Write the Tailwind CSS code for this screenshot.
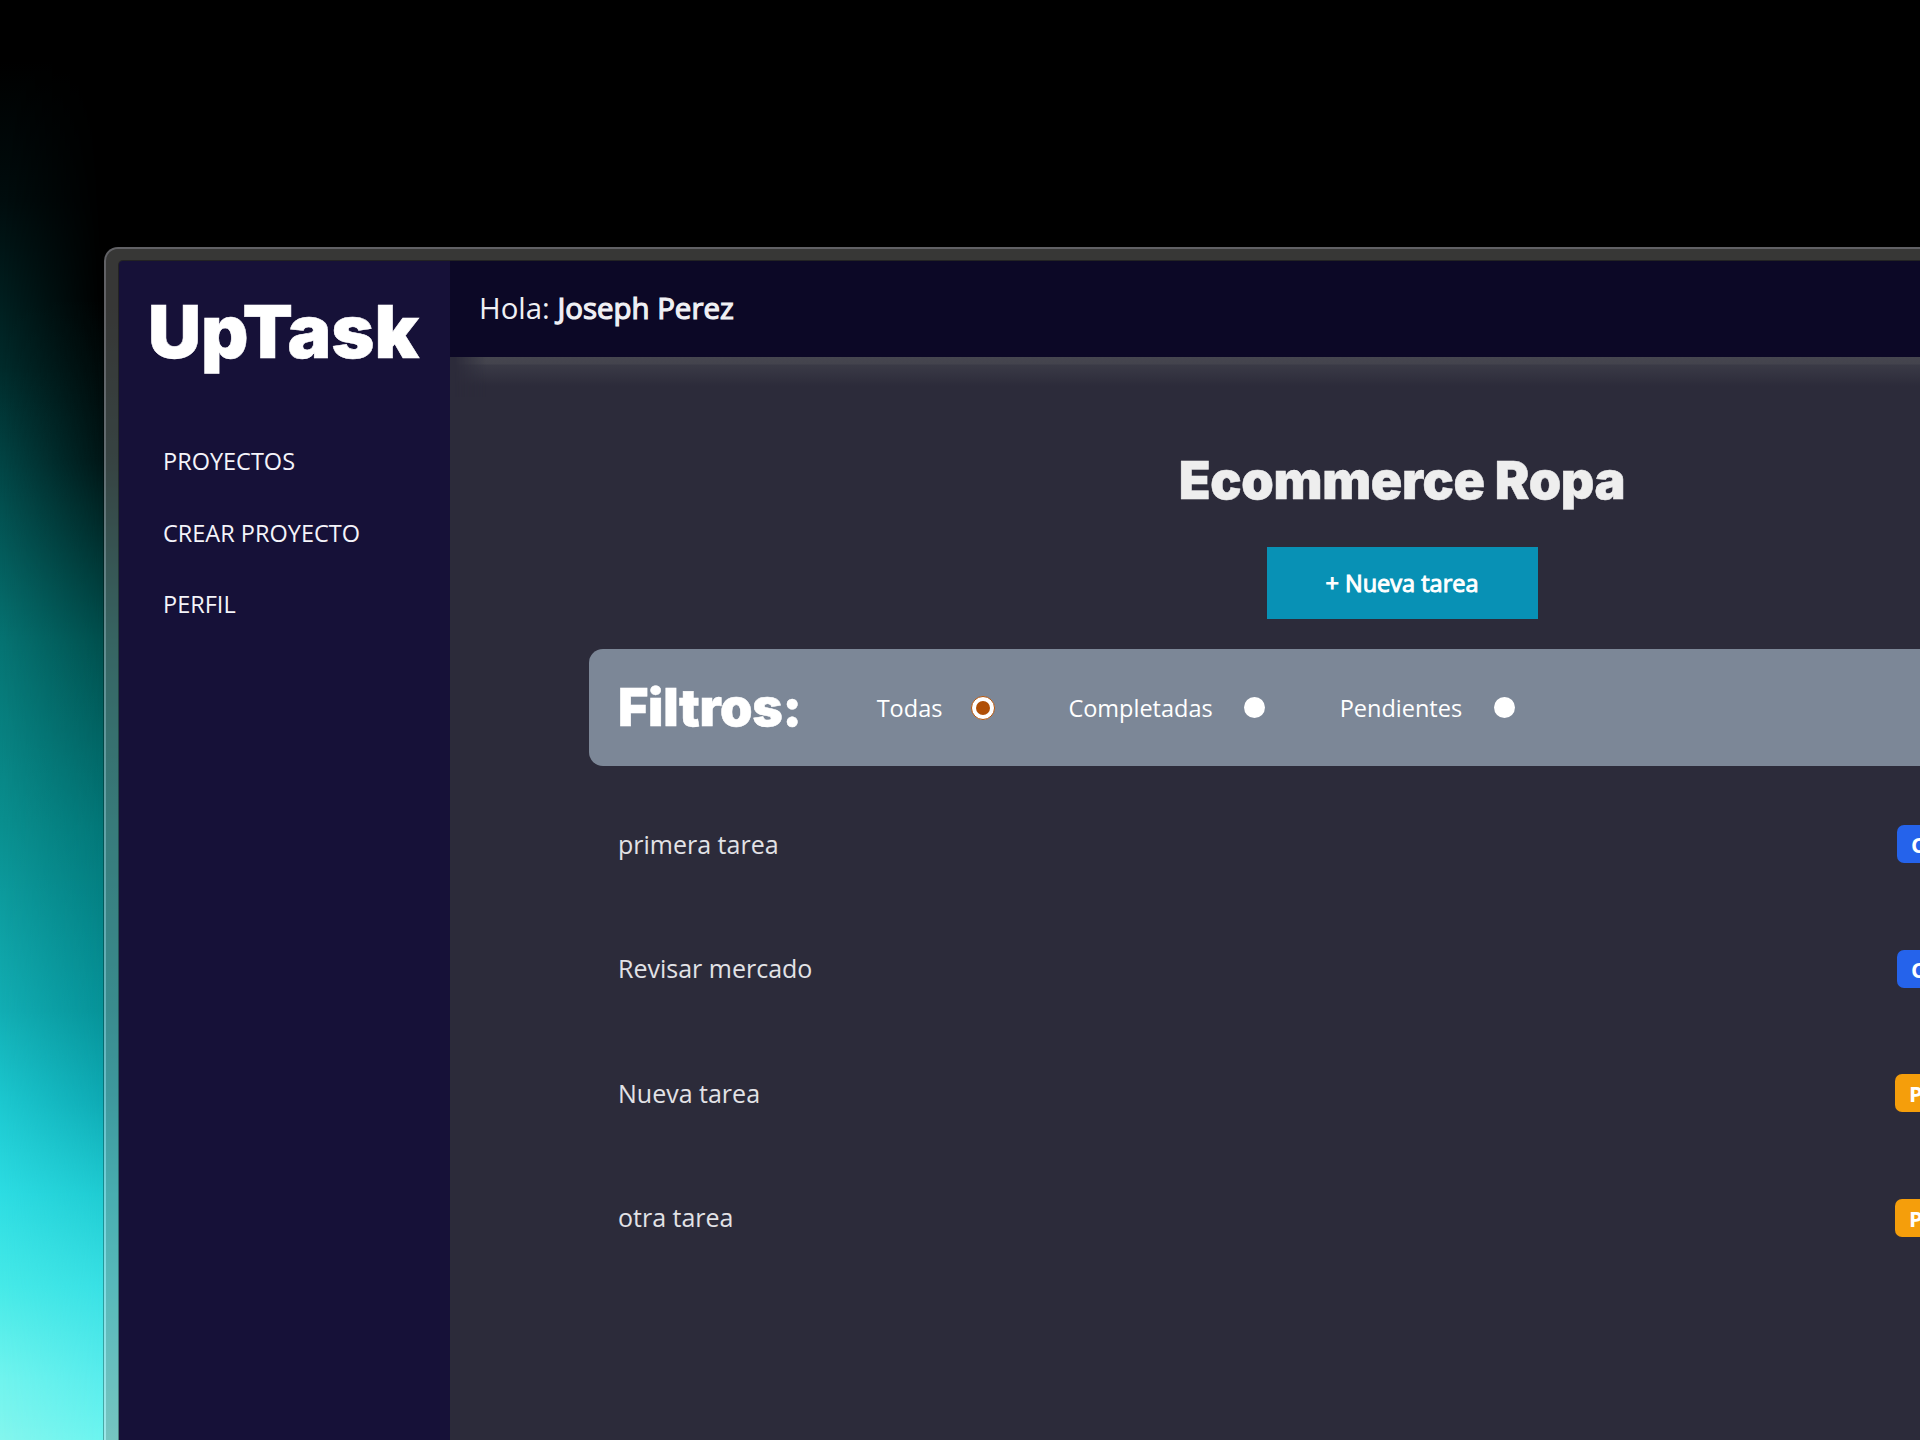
<!DOCTYPE html>
<html lang="es">
<head>
<meta charset="utf-8">
<title>UpTask</title>
<script src="https://cdn.jsdelivr.net/npm/@tailwindcss/browser@4"></script>
</head>
<body class="relative isolate h-[1440px] w-[1920px] overflow-hidden bg-black font-['Open_Sans',sans-serif] text-white">
  <!-- Aurora backdrop -->
  <div class="absolute inset-0 -z-10 bg-[linear-gradient(180deg,#000_50px,#000d0e_200px,#012b2b_367px,#024444_459px,#067473_643px,#0a9090_826px,#12aeb4_1010px,#1cc8d0_1102px,#2ddde3_1194px,#46eae8_1286px,#70f4ee_1377px,#84f6ee_1440px)]"></div>
  <div class="absolute inset-0 -z-10 bg-[linear-gradient(180deg,#000_300px,#001515_459px,#004f4d_643px,#027677_826px,#069298_1010px,#0eaab4_1102px,#1fcbd2_1194px,#38e0e4_1286px,#58ecec_1377px,#6cf4ef_1440px)] [mask-image:linear-gradient(90deg,transparent_0,black_104px)]"></div>

  <div class="pt-[247px] pl-[104px]">
    <div class="h-[1193px] w-[1900px] rounded-tl-[14px] border-t-2 border-l-2 border-[#d8d8e0]/45 bg-[#828280]/42 bg-clip-padding pt-[12px] pl-[13px] shadow-[0_0_0_1px_rgba(0,0,0,0.3)]">
      <div class="flex h-full overflow-hidden rounded-tl-[4px] bg-[#2c2b3a] shadow-[0_0_0_1px_rgba(0,0,0,0.35)]">
        <aside class="w-[331px] shrink-0 bg-[#161138] px-[29px] pt-[26px]">
          <p class="font-['Inter',sans-serif] text-[73.5px] leading-[90px] font-black tracking-[-0.1px] whitespace-nowrap [-webkit-text-stroke:0.5px_currentColor]">UpTask</p>
          <nav class="mt-[66px] flex flex-col pl-[15px] text-[23.5px] leading-[36px] text-[#f4f4fa]">
            <a class="mb-[36px]">PROYECTOS</a>
            <a class="mb-[35px]">CREAR PROYECTO</a>
            <a>PERFIL</a>
          </nav>
        </aside>
        <div class="flex grow flex-col">
          <header class="flex h-[96px] shrink-0 items-center bg-[#0c0826] px-[29px] pb-[1px] text-[29.4px] text-[#f0f0f4]">
            <p class="whitespace-pre">Hola: <span class="[-webkit-text-stroke:1.2px_currentColor]">Joseph Perez</span></p>
          </header>
          <div class="h-[40px] shrink-0 bg-[linear-gradient(180deg,#46464f_0,#43434d_7px,#3a3a46_8px,#2c2b3a_29px)] [mask-image:linear-gradient(90deg,transparent_4px,black_36px)]"></div>
          <main class="ml-[139px] flex w-[1626px] flex-col pt-[52px]">
            <h1 class="text-center font-['Inter',sans-serif] text-[52px] leading-[64px] font-black tracking-[-0.35px] text-[#eeeeee] [-webkit-text-stroke:0.5px_currentColor]">Ecommerce Ropa</h1>
            <button class="mx-auto mt-[34px] h-[72px] w-[271px] shrink-0 bg-[#0891b5] pt-[2px] text-[23.5px] [-webkit-text-stroke:1px_currentColor]">+ Nueva tarea</button>
            <section class="mt-[30px] flex h-[117px] shrink-0 items-center rounded-[14px] bg-[#7c8797] pl-[29px] text-[23.5px]">
              <h2 class="mr-[75px] font-['Inter',sans-serif] text-[52px] leading-none font-black tracking-[-0.3px] [-webkit-text-stroke:0.5px_currentColor]">Filtros:</h2>
              <label class="mr-[73px] flex items-center gap-[29px]"><span class="pt-[2px]">Todas</span><i class="flex size-[24px] items-center justify-center rounded-full border border-[#b45309] bg-white"><i class="size-[14px] rounded-full bg-[#b04f06]"></i></i></label>
              <label class="mr-[73px] flex items-center gap-[30px]"><span class="pt-[2px]">Completadas</span><i class="flex size-[24px] items-center justify-center"><i class="size-[21px] rounded-full bg-white"></i></i></label>
              <label class="flex items-center gap-[30px]"><span class="pt-[2px]">Pendientes</span><i class="flex size-[24px] items-center justify-center"><i class="size-[21px] rounded-full bg-white"></i></i></label>
            </section>
            <ul class="mt-[16px] text-[25px] text-[#e2e2e6]">
              <li class="flex h-[124.5px] items-center pl-[29px]"><p class="w-[1279px]">primera tarea</p><b class="h-[38px] rounded-[7px] bg-[#2563eb] px-[14px] text-[22px] leading-[38px] text-white">Completada</b></li>
              <li class="flex h-[124.5px] items-center pl-[29px]"><p class="w-[1279px]">Revisar mercado</p><b class="h-[38px] rounded-[7px] bg-[#2563eb] px-[14px] text-[22px] leading-[38px] text-white">Completada</b></li>
              <li class="flex h-[124.5px] items-center pl-[29px]"><p class="w-[1277px]">Nueva tarea</p><b class="h-[38px] rounded-[7px] bg-[#f59e0b] px-[14px] text-[22px] leading-[38px] text-white">Pendiente</b></li>
              <li class="flex h-[124.5px] items-center pl-[29px]"><p class="w-[1277px]">otra tarea</p><b class="h-[38px] rounded-[7px] bg-[#f59e0b] px-[14px] text-[22px] leading-[38px] text-white">Pendiente</b></li>
            </ul>
          </main>
        </div>
      </div>
    </div>
  </div>
</body>
</html>
